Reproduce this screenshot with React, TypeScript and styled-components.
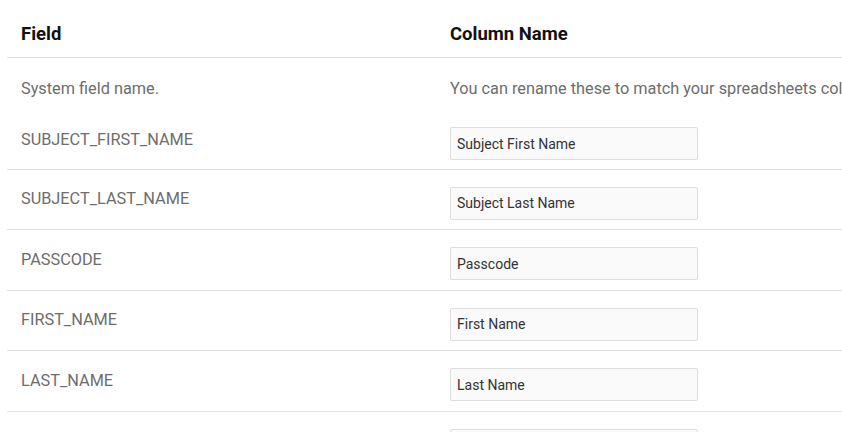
import styled, { createGlobalStyle } from 'styled-components'

type TField = {
  key: string,
  label: string
}

const FIELDS: TField[] = [
  { key: 'SUBJECT_FIRST_NAME', label: 'Subject First Name' },
  { key: 'SUBJECT_LAST_NAME', label: 'Subject Last Name' },
  { key: 'PASSCODE', label: 'Passcode' },
  { key: 'FIRST_NAME', label: 'First Name' },
  { key: 'LAST_NAME', label: 'Last Name' },
  { key: 'EMAIL', label: 'Email' },
]

const GlobalStyle = createGlobalStyle`
  html, body {
    margin: 0;
    padding: 0;
    background: #fff;
    overflow: hidden;
  }
  body {
    font-family: Roboto, "Liberation Sans", sans-serif;
  }
`

function App() {
  return (
    <>
      <GlobalStyle />
      <Page>
        <Table>
          <HeaderRow>
            <HeaderCell>Field</HeaderCell>
            <HeaderCell>Column Name</HeaderCell>
          </HeaderRow>
          <DescriptionRow>
            <TextCell>System field name.</TextCell>
            <TextCell>You can rename these to match your spreadsheets columns.</TextCell>
          </DescriptionRow>
          {FIELDS.map((field, i) => (
            <FieldRow key={field.key} $first={i === 0}>
              <FieldCell>{field.key}</FieldCell>
              <InputCell>
                <NameInput defaultValue={field.label} />
              </InputCell>
            </FieldRow>
          ))}
        </Table>
      </Page>
    </>
  )
}
export default App

const Page = styled.div`
  padding-left: 7px;
  width: 100%;
  height: 432px;
  overflow: hidden;
`

const Table = styled.div`
  width: 1100px;
  display: flex;
  flex-direction: column;
`

const Row = styled.div`
  display: grid;
  grid-template-columns: 429px 1fr;
  align-items: start;
`

const HeaderRow = styled(Row)`
  border-bottom: 1px solid #e2e2e2;
`

const HeaderCell = styled.div`
  padding: 22px 14px 11px;
  font-size: 18.5px;
  line-height: 24px;
  font-weight: 700;
  color: #111;
`

const DescriptionRow = styled(Row)``

const TextCell = styled.div`
  padding: 21px 14px 11px;
  font-size: 16.3px;
  line-height: 20px;
  color: #6d6d6d;
  white-space: nowrap;
`

const FieldRow = styled(Row)<{ $first: boolean }>`
  border-bottom: 1px solid #e2e2e2;
  padding-bottom: ${p => (p.$first ? '8.5px' : '9.5px')};
`

const FieldCell = styled.div`
  padding: 19.5px 14px 0;
  font-size: 16.3px;
  line-height: 20px;
  color: #6d6d6d;
`

const InputCell = styled.div`
  padding: 17px 14px 0;
`

const NameInput = styled.input`
  box-sizing: border-box;
  display: block;
  width: 248px;
  height: 33px;
  margin: 0;
  padding: 0 6px;
  border: 1px solid #dedede;
  border-radius: 2px;
  background: #fafafa;
  font-family: Roboto, "Liberation Sans", sans-serif;
  font-size: 14px;
  color: #333;
  outline: none;
`
